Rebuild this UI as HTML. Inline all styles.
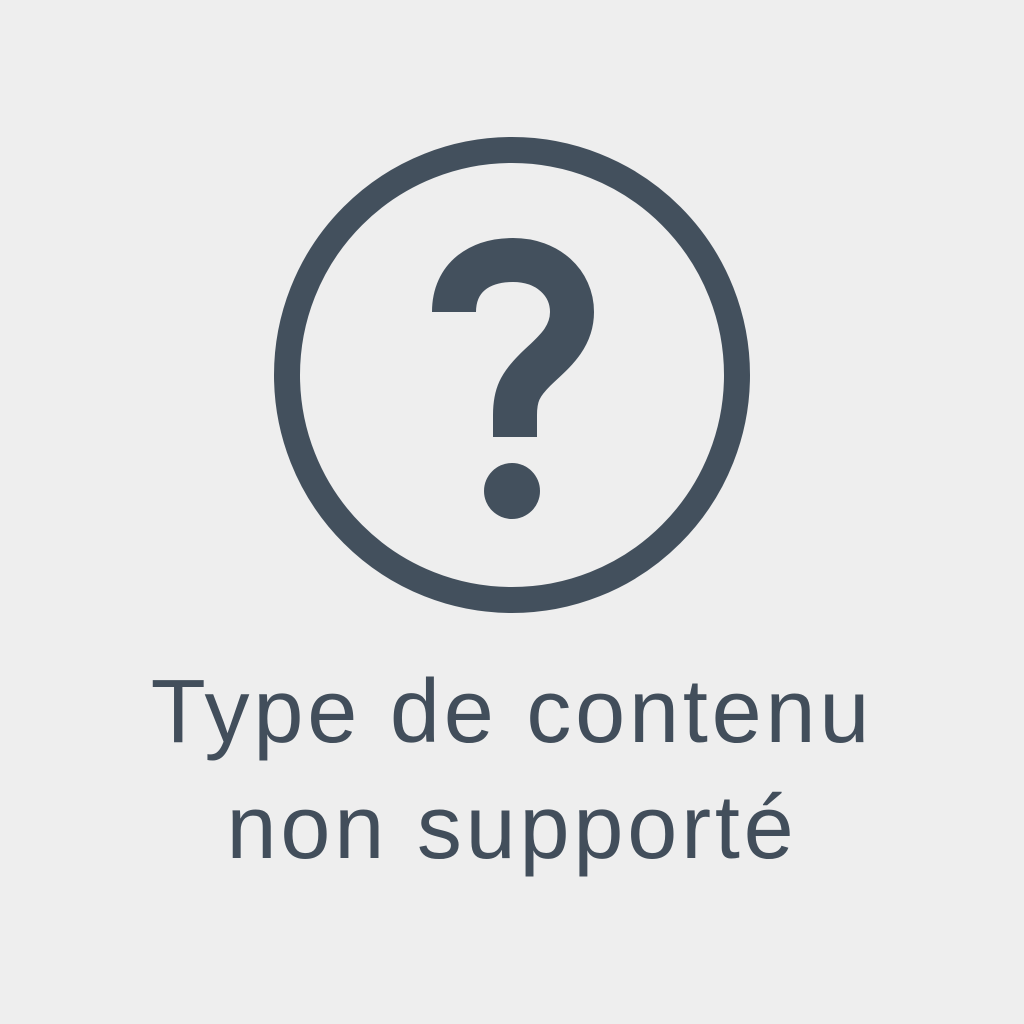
<!DOCTYPE html>
<html><head><meta charset="utf-8"><style>
html,body{margin:0;padding:0;background:#eeeeee;width:1024px;height:1024px;overflow:hidden}
svg{position:absolute;left:0;top:0}
.t{position:absolute;left:0;width:1024px;text-align:center;font-family:"Liberation Sans",sans-serif;font-size:90px;color:#424e5b;line-height:1;letter-spacing:3.8px}
</style></head><body>
<svg width="1024" height="1024" viewBox="0 0 1024 1024">
<circle cx="512" cy="375" r="225" fill="none" stroke="#43505d" stroke-width="26"/>
<path d="M454 312 C454 277 480 260 513 260 C548 260 572 283 572 312 C572 340 550 355 535 370 C520 385 515 395 515 415 L515 437" fill="none" stroke="#43505d" stroke-width="44"/>
<circle cx="512" cy="491" r="28" fill="#43505d"/>
</svg>
<div class="t" style="top:667px">Type de contenu</div>
<div class="t" style="top:783px">non supporté</div>
</body></html>
